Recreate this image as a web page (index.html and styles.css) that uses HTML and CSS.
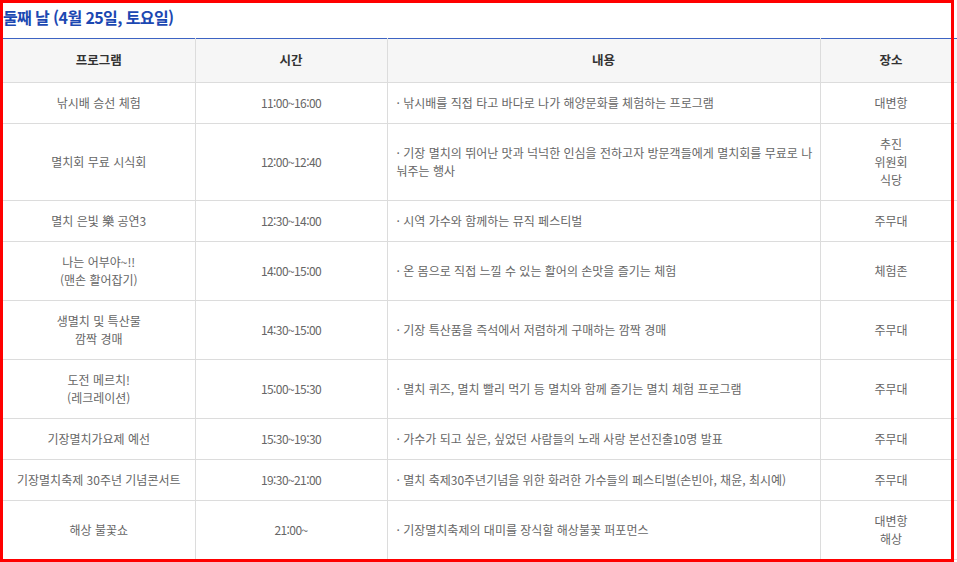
FILE: index.html
```html
<!DOCTYPE html>
<html lang="ko">
<head>
<meta charset="utf-8">
<title>둘째 날 일정</title>
<link rel="stylesheet" href="styles.css">
</head>
<body>
<div class="page">
  <h2 class="day-title">둘째 날 (4월 25일, 토요일)</h2>
  <table class="schedule">
    <colgroup>
      <col class="c-prog">
      <col class="c-time">
      <col class="c-desc">
      <col class="c-place">
    </colgroup>
    <thead>
      <tr><th>프로그램</th><th>시간</th><th>내용</th><th>장소</th></tr>
    </thead>
    <tbody>
      <tr><td>낚시배 승선 체험</td><td class="time">11:00~16:00</td><td class="desc">· 낚시배를 직접 타고 바다로 나가 해양문화를 체험하는 프로그램</td><td>대변항</td></tr>
      <tr><td>멸치회 무료 시식회</td><td class="time">12:00~12:40</td><td class="desc">· 기장 멸치의 뛰어난 맛과 넉넉한 인심을 전하고자 방문객들에게 멸치회를 무료로 나눠주는 행사</td><td>추진<br>위원회<br>식당</td></tr>
      <tr><td>멸치 은빛 樂 공연3</td><td class="time">12:30~14:00</td><td class="desc">· 시역 가수와 함께하는 뮤직 페스티벌</td><td>주무대</td></tr>
      <tr><td>나는 어부야~!!<br>(맨손 활어잡기)</td><td class="time">14:00~15:00</td><td class="desc">· 온 몸으로 직접 느낄 수 있는 활어의 손맛을 즐기는 체험</td><td>체험존</td></tr>
      <tr><td>생멸치 및 특산물<br>깜짝 경매</td><td class="time">14:30~15:00</td><td class="desc">· 기장 특산품을 즉석에서 저렴하게 구매하는 깜짝 경매</td><td>주무대</td></tr>
      <tr><td>도전 메르치!<br>(레크레이션)</td><td class="time">15:00~15:30</td><td class="desc">· 멸치 퀴즈, 멸치 빨리 먹기 등 멸치와 함께 즐기는 멸치 체험 프로그램</td><td>주무대</td></tr>
      <tr><td>기장멸치가요제 예선</td><td class="time">15:30~19:30</td><td class="desc">· 가수가 되고 싶은, 싶었던 사람들의 노래 사랑 본선진출10명 발표</td><td>주무대</td></tr>
      <tr><td>기장멸치축제 30주년 기념콘서트</td><td class="time">19:30~21:00</td><td class="desc">· 멸치 축제30주년기념을 위한 화려한 가수들의 페스티벌(손빈아, 채윤, 최시예)</td><td>주무대</td></tr>
      <tr><td>해상 불꽃쇼</td><td class="time">21:00~</td><td class="desc">· 기장멸치축제의 대미를 장식할 해상불꽃 퍼포먼스</td><td>대변항<br>해상</td></tr>
    </tbody>
  </table>
</div>
<div class="highlight"></div>
</body>
</html>
```
FILE: styles.css
```css
html, body {
  margin: 0;
  padding: 0;
  background: #fff;
  overflow: hidden;
}
body {
  width: 957px;
  height: 562px;
  font-family: "Noto Sans CJK KR", "Noto Sans", sans-serif;
}
.page {
  padding-left: 3px;
  width: 959px;
}
.day-title {
  margin: 0;
  height: 34px;
  line-height: 34px;
  padding-bottom: 4px;
  font-size: 16px;
  font-weight: 700;
  letter-spacing: -0.6px;
  color: #1c48b2;
}
.schedule {
  width: 959px;
  table-layout: fixed;
  border-collapse: collapse;
  border-top: 1px solid #3d63c3;
  font-size: 12px;
  letter-spacing: 0;
  color: #666;
}
.c-prog { width: 192px; }
.c-time { width: 192px; }
.c-desc { width: 433px; }
.c-place { width: 142px; }
.schedule th {
  background: #f6f6f6;
  color: #333;
  font-weight: 700;
  font-size: 12.5px;
  line-height: 18px;
  padding: 12px 4px 13px;
  border: 1px solid #dcdcdc;
  border-top: 0;
}
.schedule td {
  text-align: center;
  line-height: 18px;
  padding: 11px 6px;
  border: 1px solid #dcdcdc;
}
.schedule td.time {
  letter-spacing: -0.6px;
}
.schedule th:first-child,
.schedule td:first-child { border-left: 0; }
.schedule td.desc {
  text-align: left;
  padding-left: 9px;
  padding-right: 4px;
  word-break: break-all;
}
.highlight {
  position: absolute;
  left: 0;
  top: 0;
  width: 954px;
  height: 562px;
  box-sizing: border-box;
  border: 3px solid #ff0000;
  pointer-events: none;
}
```
